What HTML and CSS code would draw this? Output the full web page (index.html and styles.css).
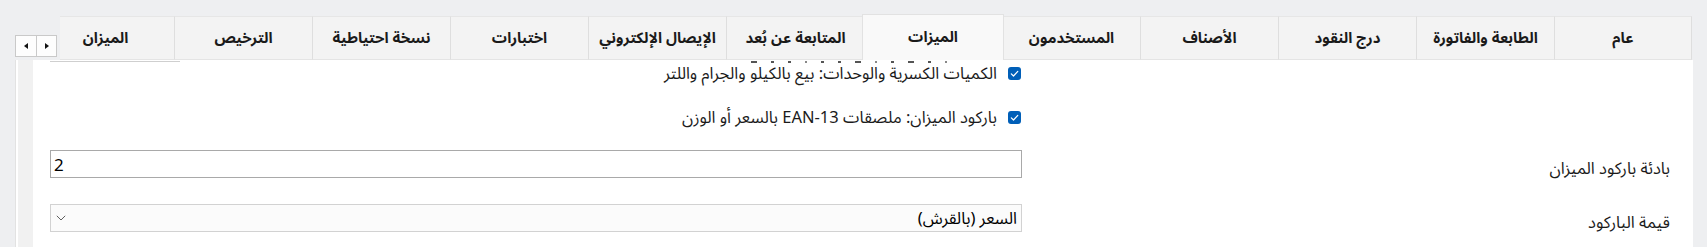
FILE: index.html
```html
<!DOCTYPE html>
<html lang="ar" dir="rtl">
<head>
<meta charset="utf-8">
<title>الإعدادات</title>
<link rel="stylesheet" href="styles.css">
</head>
<body>
<div class="app">
  <div class="tabbar">
    <div class="tabs">
      <div class="tab">عام</div>
      <div class="tab">الطابعة والفاتورة</div>
      <div class="tab">درج النقود</div>
      <div class="tab">الأصناف</div>
      <div class="tab">المستخدمون</div>
      <div class="tab active">الميزات</div>
      <div class="tab">المتابعة عن بُعد</div>
      <div class="tab">الإيصال الإلكتروني</div>
      <div class="tab">اختبارات</div>
      <div class="tab">نسخة احتياطية</div>
      <div class="tab">الترخيص</div>
      <div class="tab">الميزان</div>
    </div>
    <div class="scroller">
      <span class="sbtn"><span class="tri tri-right"></span></span>
      <span class="sbtn"><span class="tri tri-left"></span></span>
    </div>
  </div>
  <div class="panel">
    <div class="form">
      <div class="cut">
        <span class="frags">
          <i></i><i></i><i></i><i></i><i></i><i></i><i></i><i></i><i></i><i></i><i></i><i></i>
        </span>
        <span class="cut-box"></span>
      </div>
      <div class="check-row r2">
        <span class="cb"><svg viewBox="0 0 13 13" width="13" height="13"><path d="M3.3 6.8 L5.5 9 L9.8 4.4" fill="none" stroke="#fff" stroke-width="1.2" stroke-linecap="round" stroke-linejoin="round"/></svg></span>
        <span class="cb-label">الكميات الكسرية والوحدات: بيع بالكيلو والجرام واللتر</span>
      </div>
      <div class="check-row r3">
        <span class="cb"><svg viewBox="0 0 13 13" width="13" height="13"><path d="M3.3 6.8 L5.5 9 L9.8 4.4" fill="none" stroke="#fff" stroke-width="1.2" stroke-linecap="round" stroke-linejoin="round"/></svg></span>
        <span class="cb-label">باركود الميزان: ملصقات EAN-13 بالسعر أو الوزن</span>
      </div>
      <div class="label r4">بادئة باركود الميزان</div>
      <div class="field r4"><input class="textbox" type="text" value="2"></div>
      <div class="label r5">قيمة الباركود</div>
      <div class="field r5">
        <div class="select">
          <span class="select-text">السعر (بالقرش)</span>
          <svg class="chev" viewBox="0 0 10 6" width="10" height="6"><path d="M0.8 0.8 L5 5 L9.2 0.8" fill="none" stroke="#606060" stroke-width="1"/></svg>
        </div>
      </div>
    </div>
    <div class="vscroll"></div>
  </div>
</div>
</body>
</html>
```
FILE: styles.css
```css
html, body {
  margin: 0;
  padding: 0;
}
body {
  background: #eeeff1;
  font-family: "Noto Sans Arabic", "DejaVu Sans", "Noto Sans", sans-serif;
  color: #1b1b1b;
  width: 1707px;
  height: 247px;
  overflow: hidden;
}
.app {
  display: flex;
  flex-direction: column;
}
.tabbar {
  display: flex;
  height: 60px;
  align-items: flex-end;
  padding: 0 15px 0 15px;
}
.tabs {
  width: 1632px;
  flex: none;
  height: 46px;
  display: flex;
  align-items: flex-end;
  overflow: hidden;
}
.tab {
  flex: none;
  width: 138px;
  height: 44px;
  box-sizing: border-box;
  background: #f3f3f3;
  border-top: 1px solid #e6e6e6;
  border-left: 1px solid #dedede;
  border-bottom: 1px solid #e4e4e4;
  display: flex;
  align-items: center;
  justify-content: center;
  font-size: 15px;
  font-weight: 700;
  color: #1a1a1a;
  white-space: nowrap;
}
.tab:first-child {
  border-right: 1px solid #dedede;
}
.tab.active {
  height: 46px;
  width: 142px;
  margin: 0 -2px;
  position: relative;
  z-index: 1;
  background: #f9f9f9;
  border: 1px solid #e2e2e2;
  border-bottom: none;
  padding-bottom: 2px;
}
.scroller {
  display: flex;
  margin-right: 3px;
  margin-bottom: 3px;
}
.sbtn {
  width: 21px;
  height: 22px;
  box-sizing: border-box;
  background: #fdfdfd;
  border: 1px solid #c9c9c9;
  display: flex;
  align-items: center;
  justify-content: center;
}
.sbtn + .sbtn {
  border-right: none;
}
.tri {
  width: 0;
  height: 0;
  border-top: 3px solid transparent;
  border-bottom: 3px solid transparent;
}
.tri-right {
  border-left: 4px solid #111;
}
.tri-left {
  border-right: 4px solid #111;
}
.panel {
  display: flex;
  margin: 0 14px 0 15px;
  height: 187px;
  background: #ffffff;
  border-left: 1px solid #e2e2e2;
}
.vscroll {
  width: 15px;
  flex: none;
  background: #f1f1f1;
  margin-left: 2px;
}
.form {
  width: 1660px;
  flex: none;
  box-sizing: border-box;
  padding-left: 17px;
  display: grid;
  grid-template-columns: 671px 972px;
  align-content: start;
}
.cut {
  grid-column: 2;
  grid-row: 1;
  height: 3px;
  display: flex;
  align-items: flex-start;
  justify-content: space-between;
}
.frags {
  display: flex;
  gap: 14px;
  margin-right: 75px;
  margin-top: 1px;
}
.frags i {
  display: block;
  width: 3px;
  height: 2px;
  background: #555;
}
.frags i:nth-child(3n) {
  width: 6px;
}
.frags i:nth-child(4n+1) {
  width: 2px;
  background: #888;
}
.cut-box {
  width: 130px;
  height: 1px;
  background: #cfcfcf;
  margin-top: 1px;
}
.check-row {
  grid-column: 2;
  display: flex;
  align-items: center;
  height: 21px;
  padding-right: 1px;
}
.check-row.r2 {
  grid-row: 2;
}
.check-row.r3 {
  grid-row: 3;
  margin-top: 23px;
}
.cb {
  width: 13px;
  height: 13px;
  flex: none;
  border-radius: 3px;
  background: #005fb8;
  display: flex;
}
.cb-label {
  margin-right: 11px;
  font-size: 16.5px;
  line-height: 21px;
  white-space: nowrap;
}
.label {
  grid-column: 1;
  align-self: end;
  padding-right: 23px;
  font-size: 16.5px;
  line-height: 18px;
  white-space: nowrap;
}
.label.r4 { grid-row: 4; }
.label.r5 { grid-row: 5; }
.field {
  grid-column: 2;
}
.field.r4 {
  grid-row: 4;
  margin-top: 22px;
}
.field.r5 {
  grid-row: 5;
  margin-top: 26px;
}
.textbox {
  display: block;
  width: 100%;
  height: 28px;
  box-sizing: border-box;
  margin: 0;
  border: 1px solid #a9a9a9;
  padding: 0 3px;
  direction: ltr;
  text-align: left;
  font-family: "Noto Sans", "DejaVu Sans", sans-serif;
  font-size: 17px;
  color: #000;
  background: #fff;
  outline: none;
}
.select {
  height: 28px;
  box-sizing: border-box;
  border: 1px solid #d2d2d2;
  background: #fbfbfb;
  display: flex;
  align-items: center;
  justify-content: space-between;
  padding: 0 4px 0 5px;
}
.select-text {
  font-size: 16.5px;
  color: #000;
  white-space: nowrap;
}
.chev {
  display: block;
}
```
